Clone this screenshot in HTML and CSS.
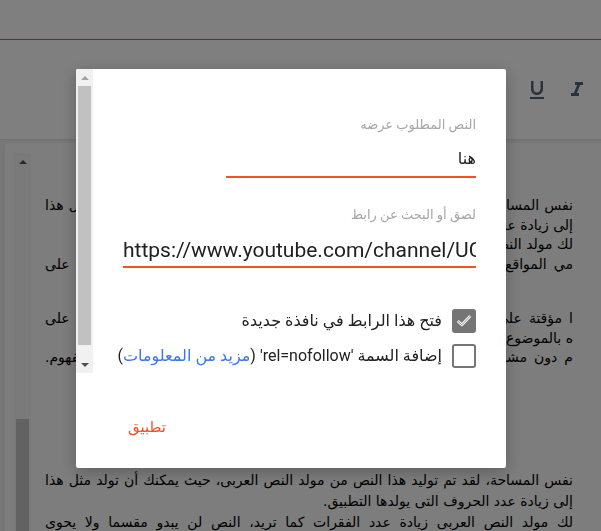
FILE: index.html
```html
<!DOCTYPE html>
<html lang="ar">
<head>
    <meta charset="UTF-8">
    <meta name="viewport" content="width=device-width, initial-scale=1.0">
    <title>Post editor - link</title>
    <link rel="stylesheet" href="styles.css">
</head>
<body>
    <div class="page">
        <div class="topbar"></div>

        <div class="toolbar">
            <button class="tool" title="Underline">
                <svg viewBox="0 0 24 24" width="24" height="24"><path d="M12 17c3.31 0 6-2.69 6-6V3h-2.5v8c0 1.930-1.570 3.5-3.5 3.5S8.5 12.93 8.5 11V3H6v8c0 3.31 2.69 6 6 6zm-7 2v2h14v-2H5z"/></svg>
            </button>
            <button class="tool" title="Italic">
                <svg viewBox="0 0 24 24" width="24" height="24"><path d="M10 4v3h2.21l-3.42 8H6v3h8v-3h-2.21l3.42-8H18V4z"/></svg>
            </button>
        </div>

        <div class="workspace">
            <div class="editor">
                <div class="rail">
                    <span class="rail-arrow"></span>
                    <span class="rail-thumb"></span>
                </div>
                <div class="viewport">
                    <div class="post" dir="rtl">
                        <p>
                            <span class="line full">نفس المساحة، لقد تم توليد هذا النص من مولد النص العربى، حيث يمكنك أن تولد مثل هذا</span>
                            <span class="line">إلى زيادة عدد الحروف التى يولدها التطبيق.</span>
                            <span class="line">لك مولد النص العربى زيادة عدد الفقرات كما تريد،</span>
                            <span class="line full">مي المواقع على وجه الخصوص، حيث يحتاج العميل فى كثير من الأحيان أن يطلع على</span>
                        </p>
                        <p class="gap-small">
                            <span class="line full">ا مؤقتة على التصميم ليظهر للعميل الشكل كاملاً، دور مولد النص العربى أن يوفر على</span>
                            <span class="line">ه بالموضوع الذى يتحدث عنه التصميم فيظهر بشكل لا يليق.</span>
                            <span class="line full">م دون مشكلة فلن يبدو وكأنه نص منسوخ، غير منظم، غير منسق، أو حتى غير مفهوم.</span>
                        </p>
                        <p class="gap-large">
                            <span class="line full">نفس المساحة، لقد تم توليد هذا النص من مولد النص العربى، حيث يمكنك أن تولد مثل هذا</span>
                            <span class="line">إلى زيادة عدد الحروف التى يولدها التطبيق.</span>
                            <span class="line full">لك مولد النص العربى زيادة عدد الفقرات كما تريد، النص لن يبدو مقسما ولا يحوى</span>
                        </p>
                    </div>
                </div>
            </div>
        </div>
    </div>

    <div class="scrim"></div>

    <div class="dialog" dir="rtl">
        <div class="dialog-body">
            <div class="dialog-content">
                <label class="field-label" for="link-text">النص المطلوب عرضه</label>
                <input class="field text-field" id="link-text" type="text" value="هنا">

                <label class="field-label" for="link-url">لصق أو البحث عن رابط</label>
                <input class="field url-field" id="link-url" type="text" dir="ltr" value="https://www.youtube.com/channel/UCq8XmVbZ3nR2kLwTfY5pQaA">

                <label class="check first">
                    <span class="box checked">
                        <svg viewBox="0 0 24 24" width="22" height="22">
                            <polyline points="4.5,12 9.5,16.5 19.5,6" fill="none" stroke="#fff" stroke-width="3.2" stroke-linejoin="round"/>
                            <polyline points="4.5,12 9.5,16.5 19.5,6" fill="none" stroke="#757575" stroke-width="1"/>
                        </svg>
                    </span>
                    <span class="check-text">فتح هذا الرابط في نافذة جديدة</span>
                </label>

                <label class="check">
                    <span class="box"></span>
                    <span class="check-text">إضافة السمة 'rel=nofollow' (<a href="#" class="more">مزيد من المعلومات</a>)</span>
                </label>
            </div>

            <!-- scrollbar of the dialog body, on the left in rtl -->
            <div class="scroll-rail">
                <span class="scroll-btn"><span class="arrow-up"></span></span>
                <span class="scroll-thumb"></span>
                <span class="scroll-track"></span>
                <span class="scroll-btn"><span class="arrow-down"></span></span>
            </div>
        </div>

        <div class="dialog-footer">
            <button class="apply">تطبيق</button>
        </div>
    </div>
</body>
</html>
```

FILE: styles.css
```css
html, body {
    margin: 0;
    padding: 0;
    height: 100%;
    overflow: hidden;
}

body {
    font-family: Roboto, "DejaVu Sans", sans-serif;
    color: #212121;
    background-color: #fff;
}

.page {
    height: 100vh;
    display: flex;
    flex-direction: column;
}

.topbar {
    height: 39px;
    background-color: #fff;
    border-bottom: 1px solid #f4511e;
    flex-shrink: 0;
}

.toolbar {
    height: 99px;
    display: flex;
    justify-content: flex-end;
    align-items: center;
    gap: 16px;
    padding-right: 12px;
    background-color: #fff;
    border-bottom: 1px solid #e4e4e4;
    flex-shrink: 0;
}

.tool {
    width: 24px;
    height: 24px;
    padding: 0;
    border: none;
    background: none;
}

.tool svg {
    display: block;
    fill: #50647a;
}

.workspace {
    flex: 1;
    min-height: 0;
    background-color: #eeeeee;
    padding: 3px 0 0 5px;
    display: flex;
}

.editor {
    flex: 1;
    display: flex;
    background-color: #fafafa;
    border-radius: 4px 0 0 0;
    padding: 10px 0 0 9px;
    overflow: hidden;
}

.rail {
    width: 17px;
    flex-shrink: 0;
    background-color: #f4f4f4;
    display: flex;
    flex-direction: column;
    align-items: center;
}

.rail-arrow {
    margin-top: 7px;
    width: 0;
    height: 0;
    border-left: 4px solid transparent;
    border-right: 4px solid transparent;
    border-bottom: 4px solid #505050;
}

.rail-thumb {
    margin-top: 255px;
    width: 13px;
    flex: 1;
    background-color: #c4c4c4;
}

.viewport {
    flex: 1;
    margin-right: 28px;
    overflow: hidden;
}

.post {
    margin-left: 14px;
    padding-top: 43px;
    font-family: "DejaVu Sans", sans-serif;
    font-size: 14px;
    line-height: 19.5px;
    color: #000;
}

.post p {
    margin: 0;
}

.post .gap-small {
    margin-top: 35px;
}

.post .gap-large {
    margin-top: 102px;
}

.post .gap-large .line {
    line-height: 21px;
}

.line {
    display: block;
    white-space: nowrap;
    text-align: right;
}

.line.full {
    text-align: justify;
    text-align-last: justify;
}

.scrim {
    position: fixed;
    inset: 0;
    background-color: rgba(0, 0, 0, 0.5);
}

.dialog {
    position: fixed;
    left: 76px;
    top: 69px;
    width: 430px;
    height: 399px;
    background-color: #fff;
    border-radius: 2px;
    box-shadow: 0 4px 16px rgba(0, 0, 0, 0.25);
    display: flex;
    flex-direction: column;
    overflow: hidden;
}

.dialog-body {
    height: 304px;
    flex-shrink: 0;
    display: flex;
}

.dialog-content {
    flex: 1;
    min-width: 0;
    overflow: hidden;
    padding: 47px 30px 0 30px;
}

.scroll-rail {
    width: 17px;
    flex-shrink: 0;
    background-color: #f1f1f1;
    display: flex;
    flex-direction: column;
}

.scroll-btn {
    height: 17px;
    display: flex;
    align-items: center;
    justify-content: center;
}

.arrow-up {
    width: 0;
    height: 0;
    border-left: 4px solid transparent;
    border-right: 4px solid transparent;
    border-bottom: 4px solid #a3a3a3;
}

.arrow-down {
    width: 0;
    height: 0;
    border-left: 4px solid transparent;
    border-right: 4px solid transparent;
    border-top: 4px solid #505050;
}

.scroll-thumb {
    height: 259px;
    margin: 0 2px;
    background-color: #c1c1c1;
}

.scroll-track {
    flex: 1;
}

.field-label {
    display: block;
    font-size: 13px;
    line-height: 18px;
    color: #a6a6a6;
}

.field {
    display: block;
    border: none;
    border-bottom: 2px solid #f4511e;
    outline: none;
    background: transparent;
    margin: 12px 0 0;
    font-family: Roboto, "DejaVu Sans", sans-serif;
    color: #212121;
}

.text-field {
    width: 250px;
    height: 22px;
    padding: 2px 0 6px;
    font-size: 16px;
    line-height: 22px;
}

.url-field {
    width: 100%;
    box-sizing: content-box;
    height: 24px;
    padding: 2px 0 4px;
    font-size: 21px;
    line-height: 24px;
}

.field + .field-label {
    margin-top: 28px;
}

.check {
    display: flex;
    align-items: center;
    gap: 10px;
    margin-top: 11px;
    font-size: 16px;
    line-height: 24px;
    color: #212121;
    white-space: nowrap;
}

.check.first {
    margin-top: 41px;
}

.box {
    width: 24px;
    height: 24px;
    box-sizing: border-box;
    border: 2px solid #757575;
    border-radius: 3px;
    flex-shrink: 0;
    display: flex;
    align-items: center;
    justify-content: center;
}

.box.checked {
    background-color: #757575;
}

.box svg {
    display: block;
}

.more {
    color: #3b78e7;
    text-decoration: none;
}

.dialog-footer {
    flex: 1;
    display: flex;
    justify-content: flex-end;
    align-items: flex-start;
    padding: 44px 44px 0;
}

.apply {
    border: none;
    background: none;
    padding: 0 8px;
    font-family: Roboto, "DejaVu Sans", sans-serif;
    font-size: 15px;
    line-height: 20px;
    color: #f4511e;
}
```
